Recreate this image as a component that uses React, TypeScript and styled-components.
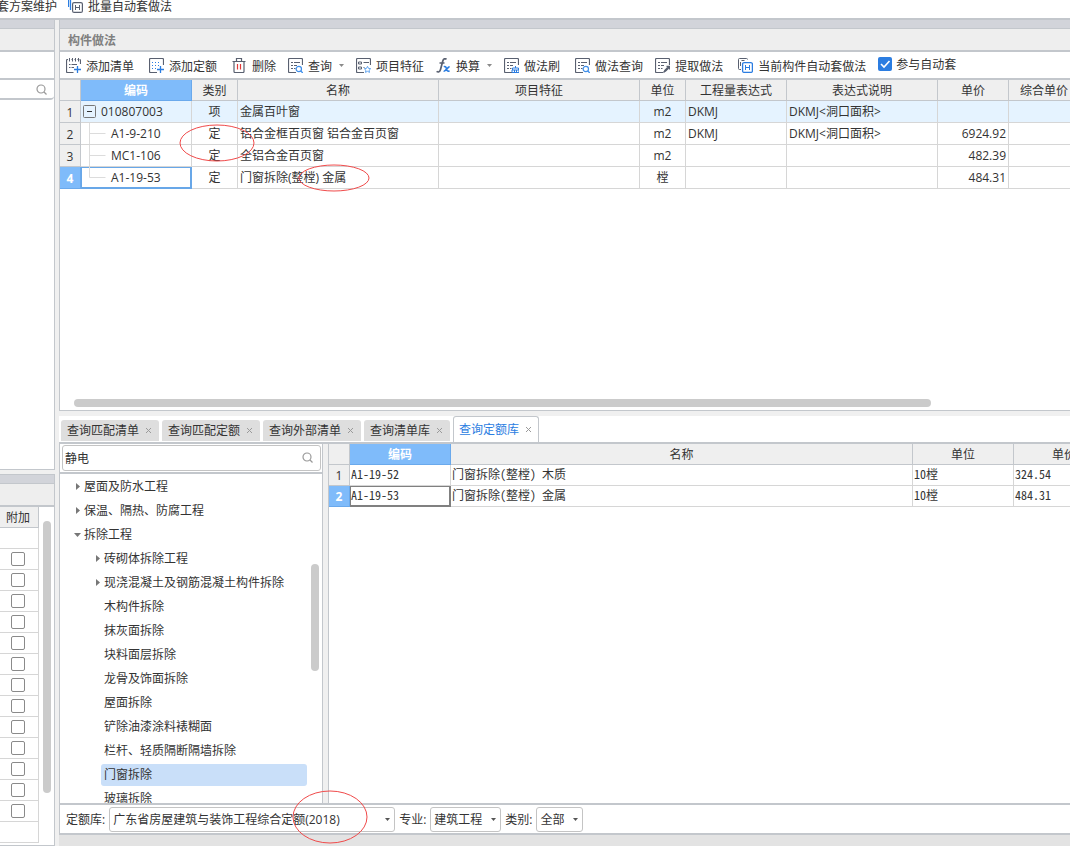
import React from 'react';
import styled, { createGlobalStyle, css } from 'styled-components';

const line = '#c3c7cc';
const cellLine = '#d6d6d6';
const blue = '#7fbbfa';
const ink = '#333';
const uiFont = "'Open Sans', 'Noto Sans CJK SC', sans-serif";

const Global = createGlobalStyle`
  * { box-sizing: border-box; }
  body { margin: 0; overflow: hidden; background: #f0f0f0; }
  body, button, input, select, table {
    font-family: ${uiFont};
    font-size: 12px;
    line-height: 16px;
    color: ${ink};
  }
  button { padding: 0; border: 0; background: none; white-space: nowrap; }
  svg { display: block; flex: none; }
`;

const Shell = styled.div`
  position: relative;
  display: flex;
  flex-direction: column;
  height: 100vh;
  overflow: hidden;
`;

const Ribbon = styled.header`
  display: flex;
  align-items: flex-start;
  gap: 11px;
  height: 20px;
  flex: none;
  background: #fff;
  border-bottom: 2px solid ${line};
`;

const ClippedCommand = styled.button`
  display: flex;
  justify-content: flex-end;
  width: 57px;
  height: 14px;
  align-items: center;
  overflow: hidden;
`;

const RibbonCommand = styled.button`
  display: flex;
  align-items: center;
  gap: 5px;
  height: 14px;
`;

const Workspace = styled.div`
  display: flex;
  flex: 1;
  min-height: 0;
  gap: 4px;
`;

const SideColumn = styled.aside`
  display: flex;
  flex-direction: column;
  gap: 4px;
  flex: none;
  width: 55px;
`;

const SidePane = styled.section<{ $share: number; $ruled?: boolean }>`
  display: flex;
  flex-direction: column;
  flex: ${p => p.$share} 1 0;
  min-height: 0;
  background: #fff;
  border: solid ${line};
  border-width: ${p => (p.$ruled ? 1 : 0)}px 1px 1px 0;
`;

const DragBand = styled.div`
  flex: none;
  height: 9px;
  background: #d2d4da;
  border-bottom: 1px solid ${line};
`;

const TitleBar = styled.div`
  display: flex;
  align-items: center;
  flex: none;
  height: 23px;
  padding: 2px 0 0 8px;
  background: #eee;
  border-bottom: 2px solid ${line};
  color: #808080;
  font-weight: 700;
`;

const BlankBar = styled.div`
  flex: none;
  height: 28px;
  border-bottom: 2px solid ${line};
`;

const SideSearch = styled.label`
  display: flex;
  align-items: center;
  justify-content: flex-end;
  flex: none;
  height: 20px;
  padding-right: 7px;
  border-bottom: 2px solid ${line};
  border-radius: 0 4px 4px 0;
  input { flex: 1; min-width: 0; border: 0; outline: 0; padding: 0; background: none; }
`;

const SideBody = styled.div`
  display: flex;
  flex: 1;
  min-height: 0;
  overflow: hidden;
`;

const FlagTable = styled.table`
  flex: none;
  width: 39px;
  height: max-content;
  border-collapse: separate;
  border-spacing: 0;
  th, td {
    height: 21px;
    padding: 0;
    border: solid ${cellLine};
    border-width: 0 1px 1px 0;
    text-align: center;
    vertical-align: middle;
  }
  th { padding-top: 2px; padding-right: 2px; font-weight: 400; background: #efefef; border-color: ${line}; }
  td input { display: block; margin: 0 auto 0 11px; }
`;

const Tick = styled.input`
  appearance: none;
  width: 14px;
  height: 14px;
  margin: 0;
  background: #fff;
  border: 1px solid #8a8a8a;
  border-radius: 2px;
`;

const SolidTick = styled.span`
  position: relative;
  display: block;
  width: 14px;
  height: 14px;
  input {
    appearance: none;
    display: block;
    width: 14px;
    height: 14px;
    margin: 0;
    background: #2b7de1;
    border-radius: 2px;
  }
  svg { position: absolute; inset: 0; pointer-events: none; }
`;

const VScroll = styled.div<{ $top: number; $size: string }>`
  flex: none;
  width: 8px;
  margin: 0 3px 0 4px;
  padding-top: ${p => p.$top}px;
  &::before {
    content: '';
    display: block;
    height: ${p => p.$size};
    border-radius: 4px;
    background: #cbcbcb;
  }
`;

const MainColumn = styled.main`
  display: flex;
  flex-direction: column;
  flex: 1;
  min-width: 0;
`;

const MethodPane = styled.section`
  display: flex;
  flex-direction: column;
  flex: 391 1 0;
  min-height: 0;
  background: #fff;
  border: solid ${line};
  border-width: 0 0 1px 1px;
`;

const Toolbar = styled.div`
  display: flex;
  align-items: center;
  gap: 12px;
  flex: none;
  height: 28px;
  padding-left: 6px;
  border-bottom: 2px solid ${line};
  overflow: hidden;
`;

const Tool = styled.button<{ $roomy?: boolean }>`
  display: flex;
  align-items: center;
  gap: 5px;
  flex: none;
  height: 26px;
  margin-right: ${p => (p.$roomy ? 3 : 0)}px;
`;

const ToolText = styled.span`
  padding-top: 4px;
`;

const ToolCheck = styled.label`
  display: flex;
  align-items: center;
  gap: 4px;
  flex: none;
  height: 24px;
  align-self: flex-start;
`;

const CheckText = styled.span`
  padding-top: 2px;
`;

const GridArea = styled.div`
  flex: 1;
  min-width: 0;
  min-height: 0;
  overflow: hidden;
`;

const Grid = styled.table<{ $rowHeight: number }>`
  table-layout: fixed;
  width: 0;
  border-collapse: separate;
  border-spacing: 0;
  th, td {
    padding: 0 2px;
    border: solid ${cellLine};
    border-width: 0 1px 1px 0;
    white-space: nowrap;
    overflow: hidden;
  }
  td, tbody th { height: ${p => p.$rowHeight}px; }
  th { padding-top: 2px; }
  thead th { height: 21px; }
`;

const HeadCell = styled.th<{ $active?: boolean }>`
  font-weight: 400;
  background: #efefef;
  && { border-color: ${line}; }
  ${p => p.$active && css`
    color: #fff;
    font-weight: 700;
    background: ${blue};
    && { border-color: #6aa9ec; }
  `}
`;

const Cell = styled.td<{ $align?: 'left' | 'center' | 'right'; $tint?: boolean; $focus?: string }>`
  text-align: ${p => p.$align ?? 'left'};
  background: ${p => (p.$tint ? '#e5f3ff' : '#fff')};
  ${p => p.$focus && css`
    && { border-color: ${p.$focus}; }
    box-shadow: inset 1px 1px ${p.$focus}, inset 0 0 0 1px ${p.$focus};
  `}
`;

const TreeCell = styled(Cell)`
  && { padding: 0; }
`;

const CodeLine = styled.div`
  display: flex;
  align-items: center;
  height: 21px;
`;

const Expander = styled.button`
  width: 13px;
  height: 13px;
  margin: 0 5px 0 2px;
  svg { width: 13px; height: 13px; }
`;

const HScroll = styled.div`
  flex: none;
  padding: 0 0 3px 14px;
  &::before {
    content: '';
    display: block;
    width: 86%;
    height: 8px;
    border-radius: 4px;
    background: #cbcbcb;
  }
`;

const QueryPane = styled.section`
  display: flex;
  flex-direction: column;
  flex: 419 1 0;
  min-height: 0;
  margin-top: 5px;
  background: #fff;
  border-bottom: 2px solid ${line};
`;

const TabStrip = styled.div`
  display: flex;
  align-items: flex-end;
  gap: 3px;
  flex: none;
  height: 28px;
  padding-left: 2px;
  border-bottom: 2px solid ${line};
`;

const Tab = styled.div<{ $active?: boolean }>`
  display: flex;
  align-items: center;
  gap: 6px;
  height: 21px;
  margin-bottom: 1px;
  padding: 0 7px 0 6px;
  border-radius: 3px 3px 0 0;
  background: #dedede;
  button:first-child { padding-top: 2px; }
  ${p => p.$active && css`
    height: 26px;
    margin-bottom: 0;
    padding: 0 6px 0 5px;
    background: #fff;
    border: 1px solid ${line};
    border-bottom: 0;
    button:first-child { color: #2b7de1; }
  `}
`;

const QueryBody = styled.div`
  display: flex;
  flex: 1;
  min-height: 0;
  border-left: 1px solid ${line};
`;

const TreePane = styled.div`
  display: flex;
  flex-direction: column;
  flex: none;
  width: 263px;
  border-right: 1px solid ${line};
`;

const SearchRow = styled.div`
  flex: none;
  height: 30px;
  padding: 1px 1px 0 2px;
  border-bottom: 2px solid ${line};
`;

const SearchBox = styled.label`
  display: flex;
  align-items: center;
  height: 26px;
  padding: 0 7px 0 2px;
  border: 1px solid #c4c4c4;
  border-radius: 3px;
  input { flex: 1; min-width: 0; border: 0; outline: 0; padding: 2px 0 0; background: none; }
`;

const TreeArea = styled.div`
  display: flex;
  flex: 1;
  min-height: 0;
  overflow: hidden;
`;

const TreeList = styled.ul`
  flex: 1;
  margin: 0;
  padding: 1px 0 0;
  list-style: none;
`;

const TreeItem = styled.li<{ $depth: number }>`
  display: flex;
  align-items: center;
  height: 24px;
  padding-left: ${p => p.$depth * 20 - 8}px;
`;

const TreeLabel = styled.button<{ $selected?: boolean }>`
  flex: 1;
  height: 22px;
  padding: 0 3px;
  text-align: left;
  border-radius: 3px;
  background: ${p => (p.$selected ? '#c9dff9' : 'none')};
`;

const TreeMark = styled.span`
  width: 9px;
  flex: none;
`;

const Splitter = styled.div`
  flex: none;
  width: 6px;
  background: #f0f0f0;
  border-right: 1px solid ${line};
`;

const QuotaGrid = styled(Grid)`
  tbody td {
    padding-bottom: 2px;
    padding-left: 1px;
    font-family: 'Noto Sans CJK SC', sans-serif;
    font-feature-settings: 'hwid';
  }
`;

const FilterBar = styled.form`
  display: flex;
  align-items: center;
  gap: 4px;
  flex: none;
  height: 30px;
  padding-left: 6px;
  border: solid ${line};
  border-width: 2px 0 0 1px;
  label { display: flex; align-items: center; gap: 4px; white-space: nowrap; }
`;

const FilterText = styled.span`
  padding-top: 2px;
`;

const SelectBox = styled.span<{ $width: number }>`
  position: relative;
  width: ${p => p.$width}px;
  select {
    appearance: none;
    display: block;
    width: 100%;
    height: 25px;
    padding: 2px 3px 0;
    border: 1px solid #c4c4c4;
    border-radius: 3px;
    background: #fff;
  }
  svg { position: absolute; right: 5px; top: 11px; pointer-events: none; }
`;

const StatusStrip = styled.footer`
  flex: none;
  height: 11px;
  background: #e3e3e3;
`;

const Notes = styled.svg`
  position: absolute;
  left: 0;
  top: 0;
  pointer-events: none;
`;

const G = '#596070';
const B = '#2b7de1';

const Icon = ({ children, size = 15 }: { children: React.ReactNode; size?: number }) => (
  <svg width={size} height={size} viewBox="0 0 15 15" fill="none" stroke={G} strokeWidth="1" aria-hidden="true">
    {children}
  </svg>
);

const Sheet = () => (
  <>
    <path d="M14.5 7V1.5a1 1 0 0 0-1-1h-12a1 1 0 0 0-1 1v12a1 1 0 0 0 1 1H8" strokeWidth="1.2" />
    <path d="M3 4.5h2M6 4.5h6M3 7.5h2M6 7.5h3M3 10.5h2M6 10.5h1.5" />
  </>
);

const Plus = () => <path d="M11.5 8v7M8 11.5h7" stroke={B} strokeWidth="1.3" />;
const Lens = () => (
  <>
    <circle cx="10.8" cy="11" r="2.7" stroke="#3f8fea" strokeWidth="1.2" />
    <path d="M12.8 13l2 2" stroke="#3f8fea" strokeWidth="1.3" />
  </>
);

const icons = {
  list: (
    <Icon>
      <path d="M2 1.5H1.500a1 1 0 0 0-1 1v11a1 1 0 0 0 1 1H7.500M13.500 1.500a1 1 0 0 1 1 1V6M5 1.500h.5M8 1.500h.5M11 1.500h.5" strokeWidth="1.200" />
      <path d="M3.500 0v3.500M6.500 0v3.500M9.500 0v3.500M12.500 0v3.500M3 6.500h1.500M5.500 6.500H11M3 9.500h1.500M5.500 9.500H8" />
      <Plus />
    </Icon>
  ),
  quota: (
    <Icon>
      <path d="M14.5 7V1.5a1 1 0 0 0-1-1h-12a1 1 0 0 0-1 1v12a1 1 0 0 0 1 1H8" strokeWidth="1.2" />
      <path d="M3 4.5h1M6 4.5h1M9 4.5h1M3 7.5h1M6 7.5h1M9 7.5h1M3 10.5h1M6 10.5h1" stroke={B} strokeWidth="1.2" />
      <Plus />
    </Icon>
  ),
  trash: (
    <Icon>
      <path d="M.5 3.5h13M4.5 3.5v-3h5v3M2 3.5v10a1 1 0 0 0 1 1h8a1 1 0 0 0 1-1v-10" strokeWidth="1.2" />
      <path d="M5.5 6v5.5M8.5 6v5.5" stroke="#e03a3a" strokeWidth="1.2" />
    </Icon>
  ),
  query: <Icon><Sheet /><Lens /></Icon>,
  feature: (
    <Icon>
      <path d="M14.5 7V1.5a1 1 0 0 0-1-1h-12a1 1 0 0 0-1 1v12a1 1 0 0 0 1 1H8" strokeWidth="1.2" />
      <path d="M2.5 4h3v2h-3zM2.5 9h3v2h-3zM7.5 4.5H13M7.5 9.5h1" />
      <path d="M11.5 8.3l1 2.1 2.2.3-1.6 1.5.4 2.2-2-1.1-2 1.1.4-2.2-1.6-1.5 2.2-.3z" stroke="#62a6f0" />
    </Icon>
  ),
  fx: (
    <Icon>
      <path d="M10.500 1.400C9 .2 7.400.6 6.800 3L4.500 11.500C3.900 14 2.200 14.600.6 13.400M3.500 5h5" strokeWidth="1.700" />
      <path d="M7.800 8.800c1.700-.8 2.300.2 2.700 2.100s1.200 2.900 3 1.900M13.600 8.900c-1.700-.2-4.300 4.700-6 4.400" stroke={B} strokeWidth="1.600" />
    </Icon>
  ),
  brush: (
    <Icon>
      <Sheet />
      <path d="M11.500 8v2M8.500 12v-2h6v2M8 12h7v2.500H8zM10.500 12v2.500M12.500 12v2.500" stroke={B} />
    </Icon>
  ),
  extract: (
    <Icon>
      <Sheet />
      <path d="M8.500 14.500l.8-2.600 3-3 1.700 1.700-3 3z" fill={G} stroke="none" />
      <path d="M11.500 8.500h3v3M8.500 14.500l5.500-5.500" strokeWidth="1.300" />
    </Icon>
  ),
  auto: (
    <Icon>
      <path d="M3 11.500H1.500a1 1 0 0 1-1-1v-9a1 1 0 0 1 1-1h7a1 1 0 0 1 1 1M2.500 4v4M3.500 2.500h3" />
      <rect x="4.600" y="4.600" width="9.800" height="9.800" rx="1.500" stroke={B} strokeWidth="1.300" />
      <path d="M7.500 7v5M11.500 7v5M7.500 9.500h4" stroke={B} />
    </Icon>
  ),
};

const Caret = ({ color = '#8a8a8a' }: { color?: string }) => (
  <svg width="5" height="3" viewBox="0 0 5 3" aria-hidden="true"><path d="M0 0h5L2.500 3z" fill={color} /></svg>
);

const SearchGlyph = () => (
  <svg width="11" height="11" viewBox="0 0 11 11" fill="none" stroke="#9a9a9a" strokeWidth="1.200" aria-hidden="true">
    <circle cx="5" cy="5" r="4" /><path d="M8 8l2.500 2.500" />
  </svg>
);

const CloseGlyph = () => (
  <svg width="7" height="7" viewBox="0 0 7 7" stroke="#9a9a9a" aria-hidden="true"><path d="M1 1l5 5M6 1L1 6" /></svg>
);

const tools: { icon: keyof typeof icons; text: string; menu?: boolean; roomy?: boolean }[] = [
  { icon: 'list', text: '添加清单', roomy: true },
  { icon: 'quota', text: '添加定额', roomy: true },
  { icon: 'trash', text: '删除' },
  { icon: 'query', text: '查询', menu: true },
  { icon: 'feature', text: '项目特征' },
  { icon: 'fx', text: '换算', menu: true },
  { icon: 'brush', text: '做法刷', roomy: true },
  { icon: 'query', text: '做法查询' },
  { icon: 'extract', text: '提取做法', roomy: true },
  { icon: 'auto', text: '当前构件自动套做法' },
];

const MenuGap = styled.span`
  padding-left: 2px;
`;

const methodCols = [21, 111, 46, 201, 201, 46, 101, 151, 71, 71];
const methodHeads = ['类别', '名称', '项目特征', '单位', '工程量表达式', '表达式说明', '单价', '综合单价'];
const methodRows = [
  ['010807003', '项', '金属百叶窗', '', 'm2', 'DKMJ', 'DKMJ<洞口面积>', ''],
  ['A1-9-210', '定', '铝合金框百页窗 铝合金百页窗', '', 'm2', 'DKMJ', 'DKMJ<洞口面积>', '6924.92'],
  ['MC1-106', '定', '全铝合金百页窗', '', 'm2', '', '', '482.39'],
  ['A1-19-53', '定', '门窗拆除(整樘) 金属', '', '樘', '', '', '484.31'],
];
const methodAlign = ['left', 'center', 'left', 'left', 'center', 'left', 'left', 'right'] as const;

const quotaCols = [21, 101, 462, 101, 101];
const quotaRows = [
  ['A1-19-52', '门窗拆除(整樘) 木质', '10樘', '324.54'],
  ['A1-19-53', '门窗拆除(整樘) 金属', '10樘', '484.31'],
];

const tabs = ['查询匹配清单', '查询匹配定额', '查询外部清单', '查询清单库', '查询定额库'];

const tree: { text: string; depth: number; mark?: 'closed' | 'open'; selected?: boolean }[] = [
  { text: '屋面及防水工程', depth: 1, mark: 'closed' },
  { text: '保温、隔热、防腐工程', depth: 1, mark: 'closed' },
  { text: '拆除工程', depth: 1, mark: 'open' },
  { text: '砖砌体拆除工程', depth: 2, mark: 'closed' },
  { text: '现浇混凝土及钢筋混凝土构件拆除', depth: 2, mark: 'closed' },
  { text: '木构件拆除', depth: 2 },
  { text: '抹灰面拆除', depth: 2 },
  { text: '块料面层拆除', depth: 2 },
  { text: '龙骨及饰面拆除', depth: 2 },
  { text: '屋面拆除', depth: 2 },
  { text: '铲除油漆涂料裱糊面', depth: 2 },
  { text: '栏杆、轻质隔断隔墙拆除', depth: 2 },
  { text: '门窗拆除', depth: 2, selected: true },
  { text: '玻璃拆除', depth: 2 },
];

const filters = [
  { label: '定额库:', value: '广东省房屋建筑与装饰工程综合定额(2018)', width: 286 },
  { label: '专业:', value: '建筑工程', width: 71 },
  { label: '类别:', value: '全部', width: 47 },
];

const Cols = ({ widths }: { widths: number[] }) => (
  <colgroup>{widths.map((w, i) => <col key={i} width={w} />)}</colgroup>
);

const MethodTable = () => (
  <Grid $rowHeight={22}>
    <Cols widths={methodCols} />
    <thead>
      <tr>
        <HeadCell />
        <HeadCell $active>编码</HeadCell>
        {methodHeads.map(h => <HeadCell key={h}>{h}</HeadCell>)}
      </tr>
    </thead>
    <tbody>
      {methodRows.map(([code, ...rest], r) => (
        <tr key={code}>
          <HeadCell as="th" scope="row" $active={r === 3}>{r + 1}</HeadCell>
          <TreeCell $tint={r === 0} $focus={r === 3 ? '#68a7e8' : undefined}>
            <CodeLine>
              {r === 0 ? (
                <Expander aria-label="折叠">
                  <svg viewBox="0 0 13 13" fill="none" stroke="#777">
                    <rect x=".5" y=".5" width="12" height="12" rx="1" /><path d="M4 6.500h5" stroke="#333" />
                  </svg>
                </Expander>
              ) : (
                <svg width="30" height="21" stroke="#dcdcdc" fill="none">
                  <path d={r === 3 ? 'M8.500 0v10.500h16' : 'M8.500 0v21M8.500 10.500h16'} />
                </svg>
              )}
              {code}
            </CodeLine>
          </TreeCell>
          {rest.map((v, c) => <Cell key={c} $tint={r === 0} $align={methodAlign[c + 1]}>{v}</Cell>)}
          <Cell $tint={r === 0} />
        </tr>
      ))}
    </tbody>
  </Grid>
);

const QuotaTable = () => (
  <QuotaGrid $rowHeight={21}>
    <Cols widths={quotaCols} />
    <thead>
      <tr>
        <HeadCell />
        <HeadCell $active>编码</HeadCell>
        {['名称', '单位', '单价'].map(h => <HeadCell key={h}>{h}</HeadCell>)}
      </tr>
    </thead>
    <tbody>
      {quotaRows.map((row, r) => (
        <tr key={row[0]}>
          <HeadCell as="th" scope="row" $active={r === 1}>{r + 1}</HeadCell>
          {row.map((v, c) => <Cell key={c} $focus={r === 1 && c === 0 ? '#808080' : undefined}>{v}</Cell>)}
        </tr>
      ))}
    </tbody>
  </QuotaGrid>
);

export default function App() {
  return (
    <Shell>
      <Global />
      <Ribbon>
        <ClippedCommand>套方案维护</ClippedCommand>
        <RibbonCommand>
          <Icon>
            <path d="M.5 0v7M2.500 0v10" stroke={B} strokeWidth="1.300" />
            <rect x="4.600" y="2.600" width="9.800" height="9.800" rx="1.500" strokeWidth="1.200" />
            <path d="M7.500 5v5M11.500 5v5M7.500 7.500h4" />
          </Icon>
          批量自动套做法
        </RibbonCommand>
      </Ribbon>

      <Workspace>
        <SideColumn>
          <SidePane $share={451}>
            <DragBand />
            <TitleBar />
            <BlankBar />
            <SideSearch>
              <input aria-label="搜索构件" />
              <SearchGlyph />
            </SideSearch>
          </SidePane>
          <SidePane $share={371} $ruled>
            <DragBand />
            <TitleBar />
            <SideBody>
              <FlagTable>
                <thead><tr><th>附加</th></tr></thead>
                <tbody>
                  {Array.from({ length: 15 }, (_, i) => (
                    <tr key={i}>
                      <td>{i > 0 && i < 14 && <Tick type="checkbox" aria-label={`附加 ${i}`} />}</td>
                    </tr>
                  ))}
                </tbody>
              </FlagTable>
              <VScroll $top={14} $size="84%" />
            </SideBody>
          </SidePane>
        </SideColumn>

        <MainColumn>
          <MethodPane>
            <DragBand />
            <TitleBar>构件做法</TitleBar>
            <Toolbar>
              {tools.map(t => (
                <Tool key={t.text} $roomy={t.roomy}>
                  {icons[t.icon]}
                  <ToolText>{t.text}</ToolText>
                  {t.menu && <MenuGap><Caret /></MenuGap>}
                </Tool>
              ))}
              <ToolCheck>
                <SolidTick>
                  <input type="checkbox" defaultChecked />
                  <svg viewBox="0 0 14 14" fill="none" stroke="#fff" strokeWidth="1.600"><path d="M3 7l3 3 5.500-6" /></svg>
                </SolidTick>
                <CheckText>参与自动套</CheckText>
              </ToolCheck>
            </Toolbar>
            <GridArea><MethodTable /></GridArea>
            <HScroll />
          </MethodPane>

          <QueryPane>
            <TabStrip>
              {tabs.map((t, i) => (
                <Tab key={t} $active={i === 4}>
                  <button>{t}</button>
                  <button aria-label={`关闭${t}`}><CloseGlyph /></button>
                </Tab>
              ))}
            </TabStrip>
            <QueryBody>
              <TreePane>
                <SearchRow>
                  <SearchBox>
                    <input aria-label="搜索定额" defaultValue="静电" />
                    <SearchGlyph />
                  </SearchBox>
                </SearchRow>
                <TreeArea>
                  <TreeList>
                    {tree.map(n => (
                      <TreeItem key={n.text} $depth={n.depth}>
                        <TreeMark>
                          {n.mark && (
                            <svg width="9" height="9" viewBox="0 0 9 9" fill="#777" aria-hidden="true">
                              <path d={n.mark === 'open' ? 'M2 3h7L5.500 7z' : 'M4 1v7l4-3.500z'} />
                            </svg>
                          )}
                        </TreeMark>
                        <TreeLabel $selected={n.selected}>{n.text}</TreeLabel>
                      </TreeItem>
                    ))}
                  </TreeList>
                  <VScroll $top={90} $size="45%" />
                </TreeArea>
              </TreePane>
              <Splitter />
              <GridArea><QuotaTable /></GridArea>
            </QueryBody>
            <FilterBar>
              {filters.map(f => (
                <label key={f.label}>
                  <FilterText>{f.label}</FilterText>
                  <SelectBox $width={f.width}>
                    <select defaultValue={f.value}><option>{f.value}</option></select>
                    <Caret color="#555" />
                  </SelectBox>
                </label>
              ))}
            </FilterBar>
          </QueryPane>
          <StatusStrip />
        </MainColumn>
      </Workspace>

      <Notes width="400" height="846" fill="none" stroke="#f04a4a" aria-hidden="true">
        <ellipse cx="217" cy="143" rx="37" ry="18" />
        <ellipse cx="334" cy="178" rx="35" ry="13" />
        <ellipse cx="330" cy="817" rx="37" ry="26" />
      </Notes>
    </Shell>
  );
}
